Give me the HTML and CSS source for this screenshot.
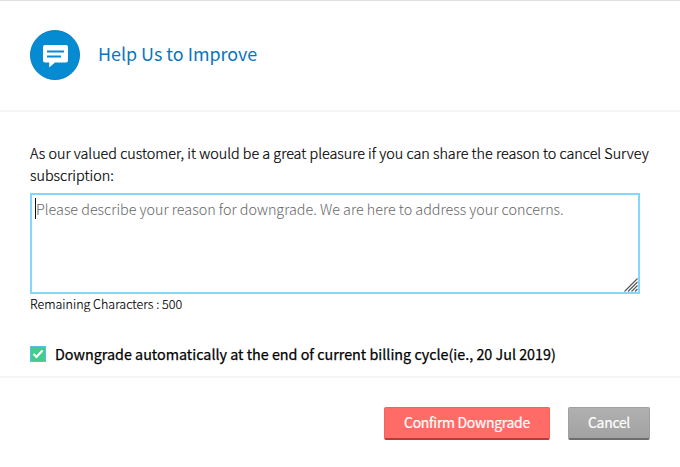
FILE: index.html
```html
<!DOCTYPE html>
<html lang="en">
<head>
    <meta charset="UTF-8">
    <meta name="viewport" content="width=device-width, initial-scale=1.0">
    <title>Help Us to Improve</title>
    <link rel="stylesheet" href="styles.css">
</head>
<body>
    <form class="dialog">
        <div class="dialog-header">
            <svg class="header-icon" width="50" height="50" viewBox="0 0 50 50">
                <circle cx="25" cy="25" r="24.5" fill="#058bd2" stroke="#0a7fc4"/>
                <path d="M15 15h21a2 2 0 0 1 2 2v13.500a2 2 0 0 1-2 2H25l-5.800 5v-5H15a2 2 0 0 1-2-2V17a2 2 0 0 1 2-2z" fill="#fff"/>
                <path d="M17 21.500h17M17 26.500h14" stroke="#058bd2" stroke-width="1.800"/>
            </svg>
            <h2>Help Us to Improve</h2>
        </div>
        <div class="dialog-body">
            <label class="question" for="reason">As our valued customer, it would be a great pleasure if you can share the reason to cancel Survey subscription:</label>
            <div class="reason-box">
                <textarea id="reason" placeholder="Please describe your reason for downgrade. We are here to address your concerns."></textarea>
                <span class="caret"></span>
                <svg class="resizer" width="14" height="14" viewBox="0 0 14 14">
                    <path d="M.5 13.500l13-13M4 13.500l9.500-9.500M7.500 13.500l6-6M11 13.500l2.500-2.500" stroke="#555" stroke-width="1.100"/>
                </svg>
            </div>
            <p class="remaining">Remaining Characters : 500</p>
            <label class="auto-downgrade">
                <input type="checkbox" checked>
                <svg class="check" width="16" height="16" viewBox="0 0 16 16">
                    <rect x=".5" y=".5" width="15" height="15" fill="#42cd8d" stroke="#55c0e8"/>
                    <path d="M3.500 8l3 3 6-6.500" fill="none" stroke="#fff" stroke-width="2.200"/>
                </svg>
                <span>Downgrade automatically at the end of current billing cycle(ie., 20 Jul 2019)</span>
            </label>
        </div>
        <div class="dialog-buttons">
            <button type="button" class="confirm-btn">Confirm Downgrade</button>
            <button type="button" class="cancel-btn">Cancel</button>
        </div>
    </form>
</body>
</html>
```
FILE: styles.css
```css
body {
    font-family: "Noto Sans CJK SC", "Noto Sans", sans-serif;
    background-color: #fff;
    color: #000;
    margin: 0;
}
.dialog {
    border-top: 1px solid #e0e0e0;
}
.dialog-header {
    display: flex;
    align-items: center;
    gap: 18px;
    height: 111px;
    padding: 0 30px 1px;
    border-bottom: 2px solid #f5f5f5;
    box-sizing: border-box;
}
.dialog-header h2 {
    margin: 0;
    padding-bottom: 5px;
    font-size: 17.9px;
    font-weight: 400;
    color: #0a75bd;
}
.dialog-body {
    padding: 30px 30px 0;
    height: 266px;
    box-sizing: border-box;
    border-bottom: 2px solid #f5f5f5;
}
.question {
    display: block;
    margin-right: -5px;
    font-size: 14.35px;
    font-weight: 300;
    line-height: 22px;
    -webkit-text-stroke: 0.2px;
}
.reason-box {
    position: relative;
    width: 610px;
    height: 101px;
    margin-top: 7px;
}
.reason-box textarea {
    display: block;
    width: 100%;
    height: 100%;
    padding: 3px 4px;
    box-sizing: border-box;
    border: 2px solid #82d7fb;
    outline: none;
    resize: none;
    font-family: inherit;
    font-size: 14.33px;
    font-weight: 300;
    line-height: 22px;
}
.reason-box textarea::placeholder {
    color: #666;
}
.caret {
    position: absolute;
    left: 5px;
    top: 5px;
    width: 1px;
    height: 21px;
    background-color: #111;
}
.resizer {
    position: absolute;
    right: 2px;
    bottom: 2px;
}
.remaining {
    margin: 0;
    font-size: 12.5px;
    font-weight: 300;
    line-height: 20px;
    -webkit-text-stroke: 0.15px;
}
.auto-downgrade {
    display: flex;
    align-items: center;
    gap: 9px;
    margin-top: 29px;
    font-size: 14.33px;
    font-weight: 400;
    line-height: 22px;
    -webkit-text-stroke: 0.25px;
}
.auto-downgrade input {
    display: none;
}
.dialog-buttons {
    display: flex;
    justify-content: flex-end;
    gap: 18px;
    padding: 29px 30px 0;
}
.dialog-buttons button {
    height: 33px;
    padding: 0 0 2px;
    border: 1px solid;
    border-bottom-width: 2px;
    border-radius: 2px;
    color: #fff;
    font-family: inherit;
    font-size: 14px;
    letter-spacing: -0.3px;
    font-weight: 400;
    -webkit-text-stroke: 0.2px;
    cursor: pointer;
}
.dialog-buttons .confirm-btn {
    width: 166px;
    background-color: #ff6c68;
    border-color: #f7605c #f7605c #b93a37;
}
.dialog-buttons .cancel-btn {
    width: 82px;
    background: linear-gradient(#b0b0b0, #a2a2a2);
    border-color: #a0a0a0 #a0a0a0 #6c6c6c;
}
```
